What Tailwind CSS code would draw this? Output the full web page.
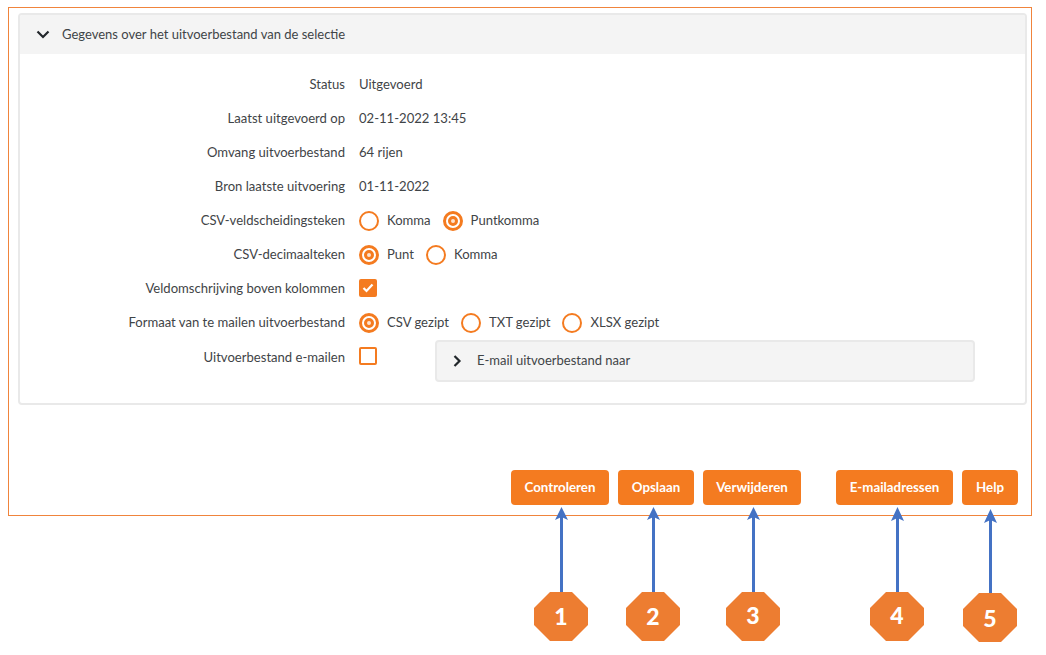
<!DOCTYPE html>
<html lang="en">
<head>
    <meta charset="UTF-8">
    <title>Uitvoerbestand</title>
    <script src="https://cdn.jsdelivr.net/npm/@tailwindcss/browser@4"></script>
</head>
<body class="bg-white font-['Lato','Open_Sans',sans-serif] text-[13.08px] text-[#3f4447]">
<div class="relative w-[1046px] h-[655px] overflow-hidden">

    <!-- Main frame -->
    <div class="absolute left-[8px] top-[7px] w-[1024px] h-[509px] border border-[#f0843c] pl-[9px] pr-[4px] pt-[5px]">

        <!-- Panel -->
        <div class="h-[392px] border-2 border-[#e9e9e9] rounded-[4px] overflow-hidden">
            <div class="flex items-center h-[39px] bg-[#f4f4f4] pl-[16px]">
                <svg class="w-[14px] h-[9px]" viewBox="0 0 14 9"><path d="M1.500 1.500 7 7 12.500 1.500" fill="none" stroke="#22272b" stroke-width="2.2"/></svg>
                <span class="ml-[12px] text-[13px]">Gegevens over het uitvoerbestand van de selectie</span>
            </div>

            <div class="pt-[14px]">
                <div class="flex items-center h-[34px]">
                    <div class="w-[325px] text-right">Status</div>
                    <div class="ml-[14px]">Uitgevoerd</div>
                </div>
                <div class="flex items-center h-[34px]">
                    <div class="w-[325px] text-right">Laatst uitgevoerd op</div>
                    <div class="ml-[14px]">02-11-2022 13:45</div>
                </div>
                <div class="flex items-center h-[34px]">
                    <div class="w-[325px] text-right">Omvang uitvoerbestand</div>
                    <div class="ml-[14px]">64 rijen</div>
                </div>
                <div class="flex items-center h-[34px]">
                    <div class="w-[325px] text-right">Bron laatste uitvoering</div>
                    <div class="ml-[14px]">01-11-2022</div>
                </div>
                <div class="flex items-center h-[34px]">
                    <div class="w-[325px] text-right">CSV-veldscheidingsteken</div>
                    <div class="ml-[14px] flex items-center">
                        <span class="w-[20px] h-[20px] rounded-full border-2 border-[#f47b20] bg-white"></span>
                        <span class="ml-[8px]">Komma</span>
                        <span class="ml-[12px] w-[20px] h-[20px] rounded-full border-[3px] border-[#f47b20] flex items-center justify-center"><span class="w-[10px] h-[10px] rounded-full border-[3px] border-[#f47b20] bg-[#fde3cf]"></span></span>
                        <span class="ml-[8px]">Puntkomma</span>
                    </div>
                </div>
                <div class="flex items-center h-[34px]">
                    <div class="w-[325px] text-right">CSV-decimaalteken</div>
                    <div class="ml-[14px] flex items-center">
                        <span class="w-[20px] h-[20px] rounded-full border-[3px] border-[#f47b20] flex items-center justify-center"><span class="w-[10px] h-[10px] rounded-full border-[3px] border-[#f47b20] bg-[#fde3cf]"></span></span>
                        <span class="ml-[8px]">Punt</span>
                        <span class="ml-[12px] w-[20px] h-[20px] rounded-full border-2 border-[#f47b20] bg-white"></span>
                        <span class="ml-[8px]">Komma</span>
                    </div>
                </div>
                <div class="flex items-center h-[34px]">
                    <div class="w-[325px] text-right">Veldomschrijving boven kolommen</div>
                    <div class="ml-[14px] w-[18px] h-[18px] -mt-[2px] rounded-[2px] bg-[#f47b20] flex items-center justify-center">
                        <svg class="w-[12px] h-[10px]" viewBox="0 0 12 10"><path d="M1.500 5 4.500 8 10.500 1.500" fill="none" stroke="#fff" stroke-width="2.2"/></svg>
                    </div>
                </div>
                <div class="flex items-center h-[34px]">
                    <div class="w-[325px] text-right">Formaat van te mailen uitvoerbestand</div>
                    <div class="ml-[14px] flex items-center">
                        <span class="w-[20px] h-[20px] rounded-full border-[3px] border-[#f47b20] flex items-center justify-center"><span class="w-[10px] h-[10px] rounded-full border-[3px] border-[#f47b20] bg-[#fde3cf]"></span></span>
                        <span class="ml-[8px]">CSV gezipt</span>
                        <span class="ml-[12px] w-[20px] h-[20px] rounded-full border-2 border-[#f47b20] bg-white"></span>
                        <span class="ml-[8px]">TXT gezipt</span>
                        <span class="ml-[12px] w-[20px] h-[20px] rounded-full border-2 border-[#f47b20] bg-white"></span>
                        <span class="ml-[8px]">XLSX gezipt</span>
                    </div>
                </div>
                <div class="flex items-start h-[44px] pt-[8px]">
                    <div class="w-[325px] text-right">Uitvoerbestand e-mailen</div>
                    <div class="ml-[14px] -mt-[1px] w-[18px] h-[18px] rounded-[2px] border-2 border-[#f47b20] bg-white"></div>
                    <div class="ml-[58px] -mt-[8px] w-[540px] h-[42px] flex items-center bg-[#f4f4f4] border-2 border-[#e9e9e9] rounded-[4px] pl-[16px]">
                        <svg class="w-[9px] h-[12px]" viewBox="0 0 9 12"><path d="M1.500 1 6.500 6 1.500 11" fill="none" stroke="#22272b" stroke-width="2.2"/></svg>
                        <span class="ml-[15px] text-[13px]">E-mail uitvoerbestand naar</span>
                    </div>
                </div>
            </div>
        </div>

        <!-- Buttons -->
        <div class="flex mt-[65px] ml-[493px] font-bold text-[13.3px] text-white">
            <button class="w-[98px] h-[35px] rounded-[4px] bg-[#f47b20]">Controleren</button>
            <button class="ml-[9px] w-[76px] h-[35px] rounded-[4px] bg-[#f47b20]">Opslaan</button>
            <button class="ml-[9px] w-[98px] h-[35px] rounded-[4px] bg-[#f47b20]">Verwijderen</button>
            <button class="ml-[35px] w-[117px] h-[35px] rounded-[4px] bg-[#f47b20]">E-mailadressen</button>
            <button class="ml-[9px] w-[56px] h-[35px] rounded-[4px] bg-[#f47b20]">Help</button>
        </div>
    </div>

    <!-- Annotation arrows -->
    <svg class="absolute left-0 top-0 w-[1046px] h-[655px] pointer-events-none" viewBox="0 0 1046 655">
        <g fill="none" stroke="#4472c4" stroke-width="3">
            <path d="M561.500 592V512"/>
            <path d="M653.500 592V512"/>
            <path d="M753.500 592V512"/>
            <path d="M897.500 592V512"/>
            <path d="M990.500 593V514"/>
        </g>
        <g fill="#4472c4">
            <path d="M561.500 507 568 520 561.500 517 555 520Z"/>
            <path d="M653.500 507 660 520 653.500 517 647 520Z"/>
            <path d="M753.500 507 760 520 753.500 517 747 520Z"/>
            <path d="M897.500 507 904 521 897.500 518 891 521Z"/>
            <path d="M990.500 509 997 523 990.500 520 984 523Z"/>
        </g>
        <g fill="#ed7d31">
            <polygon points="550,592 572,592 588,608 588,625 572,641 550,641 534,625 534,608"/>
            <polygon points="642,592 664,592 680,608 680,625 664,641 642,641 626,625 626,608"/>
            <polygon points="742,592 764,592 780,608 780,625 764,641 742,641 726,625 726,608"/>
            <polygon points="886,592 908,592 924,608 924,625 908,641 886,641 870,625 870,608"/>
            <polygon points="979,593 1001,593 1017,609 1017,626 1001,642 979,642 963,626 963,609"/>
        </g>
        <g fill="#fff" font-family="Lato, Open Sans, sans-serif" font-weight="900" font-size="23" text-anchor="middle">
            <text x="561" y="625">1</text>
            <text x="653" y="625">2</text>
            <text x="753" y="624">3</text>
            <text x="897" y="624">4</text>
            <text x="990" y="627">5</text>
        </g>
    </svg>
</div>
</body>
</html>
